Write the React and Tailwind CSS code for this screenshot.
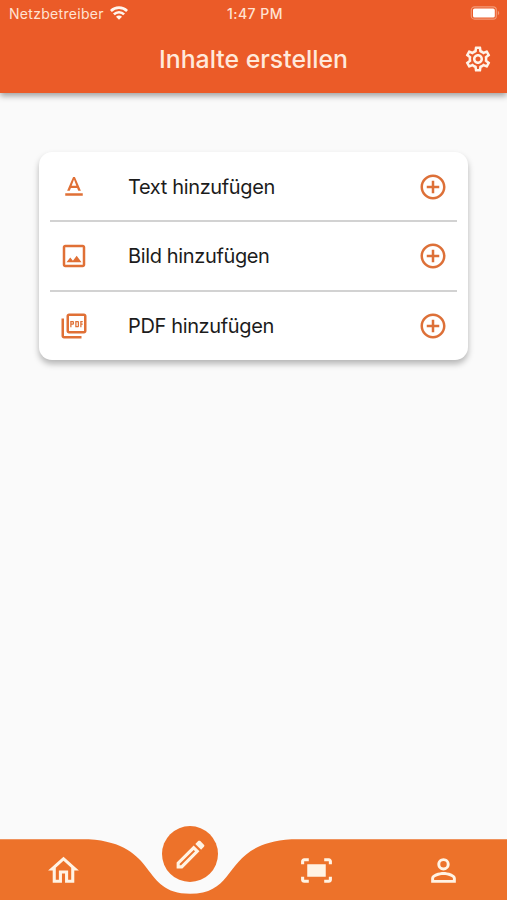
import React, { useState } from 'react';
import {
    MdAddCircleOutline,
    MdFitScreen,
    MdOutlineEdit,
    MdOutlineHome,
    MdOutlineImage,
    MdOutlinePersonOutline,
    MdOutlinePictureAsPdf,
    MdOutlineSettings,
    MdTextFormat,
} from 'react-icons/md';

const ENTRIES = [
    { id: 'text', label: 'Text hinzufügen', icon: MdTextFormat },
    { id: 'image', label: 'Bild hinzufügen', icon: MdOutlineImage },
    { id: 'pdf', label: 'PDF hinzufügen', icon: MdOutlinePictureAsPdf },
];

const TABS = [
    { id: 'home', icon: MdOutlineHome },
    { id: 'edit', icon: MdOutlineEdit },
    { id: 'scan', icon: MdFitScreen },
    { id: 'profile', icon: MdOutlinePersonOutline },
];

function WifiIcon() {
    return (
        <svg className="ml-[6px] h-[14px] w-[18px]" viewBox="0 0 18 14" fill="none" stroke="#fff6ee" strokeWidth="2.6">
            <path d="M0.9 5a11.4 11.4 0 0 1 16.2 0" />
            <path d="M3.9 8.4a7.2 7.2 0 0 1 10.2 0" />
            <path d="M9 13.8 6 10.8a4.2 4.2 0 0 1 6 0z" fill="#fff6ee" stroke="none" />
        </svg>
    );
}

function BatteryIcon() {
    return (
        <svg className="h-[14px] w-[31px]" viewBox="0 0 31 14" fill="none">
            <rect x="1.3" y="0.9" width="25" height="12.2" rx="3.2" stroke="#f39a78" strokeWidth="1.1" />
            <rect x="3" y="2.4" width="21.8" height="9.2" rx="1.6" fill="#ffffff" />
            <path d="M27.8 4.8c1.9.8 1.9 3.6 0 4.4z" fill="#f39a78" />
        </svg>
    );
}

function Header() {
    return (
        <header className="h-[93px] shrink-0 bg-[#eb5b28] shadow-[0_3px_6px_rgba(0,0,0,0.36)]">
            <div className="grid h-[26px] grid-cols-3 items-center pl-[9px] pr-[6px] text-[14px] text-[#ffe3d3]">
                <div className="flex items-center">
                    <span className="tracking-[0.3px]">Netzbetreiber</span>
                    <WifiIcon />
                </div>
                <span className="text-center font-medium tracking-[0.5px]">1:47 PM</span>
                <div className="flex justify-end">
                    <BatteryIcon />
                </div>
            </div>
            <div className="grid h-[67px] grid-cols-[44px_1fr_44px] items-center">
                <h1 className="col-start-2 text-center text-[24.8px] font-medium text-[#ffe9db]">Inhalte erstellen</h1>
                <button className="flex items-center pb-px">
                    <MdOutlineSettings className="size-[30px] text-[#fff3e8]" />
                </button>
            </div>
        </header>
    );
}

function EntryRow({ entry }) {
    const Icon = entry.icon;
    return (
        <button className="flex h-[70px] w-full items-center pl-[9px] pr-[9px] text-left first:pt-px last:h-[68px]">
            <Icon className="size-[30px] text-[#e07036]" />
            <span className="ml-[39px] flex-1 text-[20px] tracking-[-0.36px] text-[#1c1c1c]">{entry.label}</span>
            <MdAddCircleOutline className="size-[30px] text-[#dd7038]" />
        </button>
    );
}

function BottomNav() {
    const [active, setActive] = useState('edit');

    return (
        <nav className="relative h-[61px] shrink-0">
            <svg className="absolute inset-0 h-[61px] w-full" viewBox="0 0 507 61">
                <path
                    d="M0 0.3H88.7C159.7 4.8 139.4 54.8 190.1 54.8S220.6 4.8 291.5 0.3H507V61H0Z"
                    fill="#ed722a"
                />
            </svg>
            <div className="relative grid h-full grid-cols-4">
                {TABS.map(({ id, icon: Icon }) => (
                    <button key={id} onClick={() => setActive(id)} className="flex items-center justify-center pt-px">
                        {id === active ? (
                            <span className="relative -top-[16px] flex size-[56px] items-center justify-center rounded-full bg-[#ed722a]">
                                <Icon className="size-[37px] text-[#fff3e4]" />
                            </span>
                        ) : (
                            <Icon className="size-[37px] text-[#fff3e4]" />
                        )}
                    </button>
                ))}
            </div>
        </nav>
    );
}

export default function App() {
    return (
        <div className="flex h-[900px] w-[507px] flex-col overflow-hidden bg-[#fafafa] font-['Inter','Liberation_Sans',sans-serif]">
            <Header />
            <main className="flex-1 px-[39px] pt-[59px]">
                <div className="divide-y-2 divide-[#d2d2d2] rounded-[13px] bg-white px-[11px] shadow-[0_4px_6px_rgba(0,0,0,0.28)]">
                    {ENTRIES.map((entry) => (
                        <EntryRow key={entry.id} entry={entry} />
                    ))}
                </div>
            </main>
            <BottomNav />
        </div>
    );
}
